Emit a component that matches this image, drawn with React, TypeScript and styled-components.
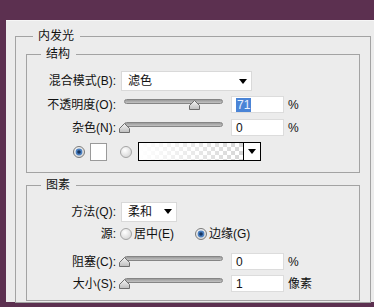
import React from "react";
import styled, { createGlobalStyle } from "styled-components";

const GlobalStyle = createGlobalStyle`
  html, body {
    margin: 0;
    padding: 0;
    background: #5c3050;
  }
  body {
    width: 374px;
    height: 307px;
    overflow: hidden;
    font-family: "Liberation Sans", "Noto Sans CJK SC", sans-serif;
    font-size: 12px;
    color: #111;
  }
`;

const Panel = styled.div`
  margin: 20px 0 0 6px;
  width: 368px;
  height: 282px;
  box-sizing: border-box;
  padding: 8px 0 0 9px;
  background: #ececec;
  border-top: 1px solid #f6f6f6;
`;

const Group = styled.fieldset<{ $w: number; $h: number; $pad: number }>`
  margin: 0;
  box-sizing: border-box;
  width: ${(p) => p.$w}px;
  height: ${(p) => p.$h}px;
  padding: ${(p) => (p.$pad ? `4px ${p.$pad}px 0` : "0")};
  border: 1px solid #a3a3a3;
  min-inline-size: 0;
`;

const Legend = styled.legend<{ $ml: number }>`
  margin-left: ${(p) => p.$ml}px;
  padding: 0 6px 0 5px;
  font-size: 12px;
  line-height: 14px;
  height: 14px;
`;

const Gap = styled.div`
  height: 5px;
`;

const Row = styled.div<{ $top: number; $h: number; $indent?: number }>`
  display: flex;
  align-items: center;
  margin-top: ${(p) => p.$top}px;
  margin-left: ${(p) => p.$indent || 0}px;
  height: ${(p) => p.$h}px;
`;

const Label = styled.div`
  width: 89px;
  text-align: right;
  white-space: nowrap;
  line-height: 14px;
  margin-right: 5px;
`;

const Select = styled.div<{ $w: number }>`
  width: ${(p) => p.$w}px;
  height: 20px;
  box-sizing: border-box;
  display: flex;
  align-items: center;
  justify-content: space-between;
  padding: 0 4px 0 6px;
  background: #fff;
  border: 1px solid #d9d9d9;
  line-height: 14px;
`;

const SliderBox = styled.div`
  position: relative;
  width: 105px;
  height: 10px;
  padding-left: 3px;
  box-sizing: border-box;
  align-self: center;
  margin-top: -2px;
`;

const Track = styled.div`
  width: 99px;
  height: 5px;
  box-sizing: border-box;
  border-radius: 3px;
  border: 1px solid #858585;
  background: linear-gradient(#9a9a9a, #c2c2c2);
`;

const Thumb = styled.svg`
  position: absolute;
  top: 1px;
`;

const Field = styled.div`
  width: 53px;
  height: 17px;
  box-sizing: border-box;
  margin-left: 5px;
  padding-left: 4px;
  display: flex;
  align-items: center;
  background: #fff;
  border: 1px solid #dcdcdc;
  line-height: 14px;
`;

const Selected = styled.span`
  background: #4a84d6;
  color: #eaf2ff;
  padding: 0 1px;
`;

const Unit = styled.span`
  margin-left: 4px;
  line-height: 14px;
`;

const Swatch = styled.div`
  width: 17px;
  height: 18px;
  box-sizing: border-box;
  background: #fff;
  border: 1px solid #9a9a9a;
  margin: 0 13px 0 5px;
`;

const GradientBox = styled.div`
  width: 123px;
  height: 19px;
  box-sizing: border-box;
  margin-left: 6px;
  display: flex;
  border: 1px solid #000;
  background: #fff;
`;

const GradientFill = styled.div`
  flex: 1;
  border-right: 1px solid #000;
  background-image: linear-gradient(to right, #fff 0%, rgba(255, 255, 255, 0) 100%),
    conic-gradient(#d6d6d6 25%, #fff 0 50%, #d6d6d6 0 75%, #fff 0);
  background-size: 100% 100%, 8px 8px;
`;

const ArrowCell = styled.div`
  width: 16px;
  display: flex;
  align-items: center;
  justify-content: center;
`;

const RadioItem = styled.div<{ $w: number }>`
  display: flex;
  align-items: center;
  width: ${(p) => p.$w}px;
  gap: 2px;
  line-height: 14px;
`;

const Arrow = () => (
  <svg width="8" height="5" viewBox="0 0 8 5">
    <polygon points="0,0 8,0 4,5" fill="#000" />
  </svg>
);

const Radio = ({ on }: { on?: boolean }) => (
  <svg width="12" height="12" viewBox="0 0 12 12">
    <defs>
      <radialGradient id="rbg" cx="0.4" cy="0.35" r="0.7">
        <stop offset="0" stopColor="#ffffff" />
        <stop offset="1" stopColor="#d4d4d4" />
      </radialGradient>
    </defs>
    <circle cx="6" cy="6" r="5.5" fill="url(#rbg)" stroke={on ? "#7a7a7a" : "#a4a4a4"} />
    {on && (
      <>
        <circle cx="6" cy="6" r="3.4" fill="#4a7fc0" />
        <circle cx="6" cy="6" r="1.8" fill="#17345e" />
      </>
    )}
  </svg>
);

const Slider = ({ value }: { value: number }) => (
  <SliderBox>
    <Track />
    <Thumb width="11" height="10" viewBox="0 0 11 10" style={{ left: 3 + Math.round(value * 99) - 5 }}>
      <defs>
        <linearGradient id="thg" x1="0" y1="0" x2="0" y2="1">
          <stop offset="0" stopColor="#f6f6f6" />
          <stop offset="1" stopColor="#bdbdbd" />
        </linearGradient>
      </defs>
      <path d="M0.5 9.5 V5.5 L5.5 0.5 L10.5 5.5 V9.5 Z" fill="url(#thg)" stroke="#6e6e6e" />
    </Thumb>
  </SliderBox>
);

const App = () => (
  <>
    <GlobalStyle />
    <Panel>
      <Group $w={356} $h={274} $pad={10}>
        <Legend $ml={7}>内发光</Legend>
        <Group $w={334} $h={126} $pad={0}>
          <Legend $ml={14}>结构</Legend>
          <Row $top={10} $h={20}>
            <Label>混合模式(B):</Label>
            <Select $w={131}>
              <span>滤色</span>
              <Arrow />
            </Select>
          </Row>
          <Row $top={5} $h={17}>
            <Label>不透明度(O):</Label>
            <Slider value={0.71} />
            <Field>
              <Selected>71</Selected>
            </Field>
            <Unit>%</Unit>
          </Row>
          <Row $top={6} $h={17}>
            <Label>杂色(N):</Label>
            <Slider value={0} />
            <Field>0</Field>
            <Unit>%</Unit>
          </Row>
          <Row $top={6} $h={19} $indent={46}>
            <Radio on />
            <Swatch />
            <Radio />
            <GradientBox>
              <GradientFill />
              <ArrowCell>
                <Arrow />
              </ArrowCell>
            </GradientBox>
          </Row>
        </Group>
        <Gap />
        <Group $w={334} $h={123} $pad={0}>
          <Legend $ml={14}>图素</Legend>
          <Row $top={10} $h={19}>
            <Label>方法(Q):</Label>
            <Select $w={56}>
              <span>柔和</span>
              <Arrow />
            </Select>
          </Row>
          <Row $top={6} $h={14}>
            <Label style={{ marginRight: 4 }}>源:</Label>
            <RadioItem $w={75}>
              <Radio />
              <span>居中(E)</span>
            </RadioItem>
            <RadioItem $w={60}>
              <Radio on />
              <span>边缘(G)</span>
            </RadioItem>
          </Row>
          <Row $top={12} $h={17}>
            <Label>阻塞(C):</Label>
            <Slider value={0} />
            <Field>0</Field>
            <Unit>%</Unit>
          </Row>
          <Row $top={5} $h={17}>
            <Label>大小(S):</Label>
            <Slider value={0} />
            <Field>1</Field>
            <Unit>像素</Unit>
          </Row>
        </Group>
      </Group>
    </Panel>
  </>
);

export default App;
